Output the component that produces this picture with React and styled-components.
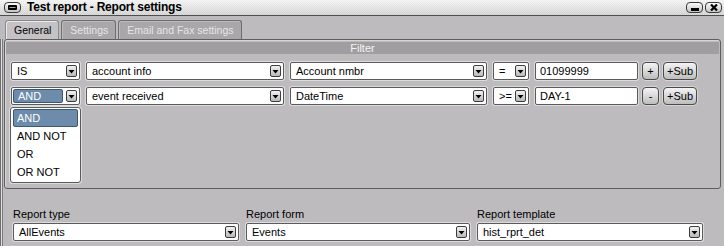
import React from "react";
import styled, { createGlobalStyle, css } from "styled-components";

const Global = createGlobalStyle`
  html, body { margin: 0; padding: 0; background: #bdbbbd; }
  body { font-family: "Liberation Sans", Arial, sans-serif; font-size: 11px; color: #000; }
`;

const Window = styled.div`
  width: 724px;
  height: 246px;
  overflow: hidden;
  background: #bdbbbd;
  display: flex;
  flex-direction: column;
  box-sizing: border-box;
`;

const TitleBar = styled.div`
  height: 15px;
  flex: none;
  display: flex;
  align-items: center;
  padding: 0 2px 0 4px;
  gap: 6px;
  border-bottom: 1px solid #4e4e4e;
  background:
    linear-gradient(rgba(255,255,255,0.75), rgba(255,255,255,0.1)),
    repeating-conic-gradient(#dadada 0 25%, #c8c8c8 0 50%) 0 0 / 2px 2px;
`;

const Title = styled.div`
  flex: 1;
  font-weight: bold;
  font-size: 12px;
  letter-spacing: -0.2px;
  line-height: 15px;
`;

const WinButton = styled.div`
  width: 17px;
  height: 11px;
  box-sizing: border-box;
  border: 1px solid #3a3a3a;
  border-radius: 4px;
  background: linear-gradient(#fafafa, #c4c4c4);
  display: flex;
  align-items: center;
  justify-content: center;
`;

const RightButtons = styled.div`
  display: flex;
  gap: 2px;
`;

const TabsRow = styled.div`
  flex: none;
  display: flex;
  gap: 2px;
  padding: 3px 0 0 5px;
  height: 20px;
  align-items: flex-end;
`;

const Tab = styled.div`
  height: 19px;
  box-sizing: border-box;
  padding: 2px 7px 0 8px;
  border: 1px solid #6e6e6e;
  border-bottom: none;
  border-radius: 3px 3px 0 0;
  font-size: 10.5px;
  line-height: 14px;
  ${(p) =>
    p.$active
      ? css`
          background: #c4c2c4;
          color: #000;
          border-color: #8a8a8a;
          box-shadow: inset 1px 1px 0 #e8e8e8;
        `
      : css`
          background: #a9a7a9;
          color: #e6e6e6;
          box-shadow: inset 1px 1px 0 #bcbabc;
        `}
`;

const Body = styled.div`
  flex: 1;
  display: flex;
  flex-direction: column;
  border-left: 1px solid #6e6e6e;
  box-shadow: inset 1px 0 0 #e0e0e0, inset 2px 0 0 #7a7a7a;
  padding: 0 3px 0 3px;
`;

const FilterGroup = styled.div`
  position: relative;
  height: 150px;
  box-sizing: border-box;
  border: 1px solid #5e5e5e;
  border-radius: 3px;
  box-shadow: inset 1px 1px 0 #d6d6d6;
  padding: 2px 1px 0;
  display: flex;
  flex-direction: column;
`;

const FilterHeader = styled.div`
  height: 12px;
  line-height: 12px;
  background: #a09ea0;
  color: #f4f4f4;
  text-align: center;
  font-size: 11px;
`;

const Rows = styled.div`
  display: flex;
  flex-direction: column;
  gap: 7px;
  padding: 8px 0 0 5px;
`;

const Row = styled.div`
  display: flex;
  align-items: center;
  gap: 6px;
  height: 18px;
`;

const SelectBox = styled.div`
  width: ${(p) => p.$w}px;
  height: 18px;
  box-sizing: border-box;
  border: 1px solid #5a5a5a;
  border-radius: 2px;
  background: #fff;
  box-shadow: 0 0 0 1px #dcdcdc;
  display: flex;
  align-items: center;
  padding: 1px 2px 1px 1px;
  gap: 3px;
  flex: none;
`;

const SelectText = styled.div`
  flex: 1;
  height: 14px;
  line-height: 14px;
  padding-left: 4px;
  font-size: 11px;
  white-space: nowrap;
  box-sizing: border-box;
  ${(p) =>
    p.$selected &&
    css`
      background: #6d8baa;
      color: #fff;
      border: 1px solid #3e5873;
      border-radius: 2px;
      line-height: 12px;
    `}
`;

const ArrowBtn = styled.div`
  width: 11px;
  height: 12px;
  box-sizing: border-box;
  border: 1px solid #3c3c3c;
  border-radius: 2px;
  background: linear-gradient(#f2f2f2, #b8b8b8);
  display: flex;
  align-items: center;
  justify-content: center;
  flex: none;
`;

const TextInput = styled.div`
  width: ${(p) => p.$w}px;
  height: 18px;
  box-sizing: border-box;
  border: 1px solid #5a5a5a;
  border-radius: 2px;
  background: #fff;
  box-shadow: 0 0 0 1px #dcdcdc;
  padding-left: 4px;
  line-height: 16px;
  font-size: 11px;
  flex: none;
`;

const PushButton = styled.div`
  width: ${(p) => p.$w}px;
  height: 18px;
  box-sizing: border-box;
  border: 1px solid #4a4a4a;
  border-radius: 4px;
  background: linear-gradient(#f4f4f4, #bdbdbd);
  box-shadow: 0 0 0 1px #d6d6d6;
  text-align: center;
  line-height: 16px;
  font-size: 11px;
  flex: none;
  margin-left: ${(p) => p.$ml || 0}px;
`;

const DropList = styled.div`
  position: absolute;
  left: 5px;
  top: 67px;
  width: 71px;
  height: 76px;
  box-sizing: border-box;
  background: #fff;
  border: 1px solid #5a5a5a;
  border-radius: 3px;
  box-shadow: 0 0 0 1px #dcdcdc;
  padding: 1px 2px;
  display: flex;
  flex-direction: column;
`;

const DropItem = styled.div`
  height: 18px;
  line-height: 16px;
  box-sizing: border-box;
  padding-left: 3px;
  font-size: 11px;
  border: 1px solid transparent;
  border-radius: 2px;
  ${(p) =>
    p.$active &&
    css`
      background: #6d8baa;
      border-color: #3e5873;
      color: #fff;
    `}
`;

const ReportGrid = styled.div`
  display: grid;
  grid-template-columns: 226px 224px 226px;
  column-gap: 7px;
  padding: 19px 0 0 9px;
`;

const Field = styled.div`
  display: flex;
  flex-direction: column;
  gap: 2px;
`;

const Label = styled.div`
  font-size: 11px;
  line-height: 13px;
`;

const Arrow = () => (
  <svg width="7" height="5" viewBox="0 0 7 5">
    <path d="M0.5 1 L6.5 1 L3.5 4.5 Z" fill="#000" />
  </svg>
);

const Select = ({ w, children, selected }) => (
  <SelectBox $w={w}>
    <SelectText $selected={selected}>{children}</SelectText>
    <ArrowBtn>
      <Arrow />
    </ArrowBtn>
  </SelectBox>
);

export default function App() {
  return (
    <>
      <Global />
      <Window>
        <TitleBar>
          <WinButton>
            <svg width="9" height="5" viewBox="0 0 9 5">
              <rect x="0" y="0" width="9" height="5" rx="1" fill="#000" />
              <rect x="1.5" y="2" width="6" height="1" fill="#aaa" />
            </svg>
          </WinButton>
          <Title>Test report - Report settings</Title>
          <RightButtons>
            <WinButton>
              <svg width="8" height="7" viewBox="0 0 8 7">
                <rect x="0" y="4" width="8" height="3" fill="#000" />
              </svg>
            </WinButton>
            <WinButton>
              <svg width="8" height="7" viewBox="0 0 8 7">
                <path d="M1 0.5 L7 6.5 M7 0.5 L1 6.5" stroke="#000" strokeWidth="2.2" />
              </svg>
            </WinButton>
          </RightButtons>
        </TitleBar>
        <TabsRow>
          <Tab $active>General</Tab>
          <Tab>Settings</Tab>
          <Tab>Email and Fax settings</Tab>
        </TabsRow>
        <Body>
          <FilterGroup>
            <FilterHeader>Filter</FilterHeader>
            <Rows>
              <Row>
                <Select w={69}>IS</Select>
                <Select w={198}>account info</Select>
                <Select w={197}>Account nmbr</Select>
                <Select w={36}>=</Select>
                <TextInput $w={103}>01099999</TextInput>
                <PushButton $w={17} $ml={-2}>+</PushButton>
                <PushButton $w={34} $ml={-2}>+Sub</PushButton>
              </Row>
              <Row>
                <Select w={69} selected>AND</Select>
                <Select w={198}>event received</Select>
                <Select w={197}>DateTime</Select>
                <Select w={36}>&gt;=</Select>
                <TextInput $w={103}>DAY-1</TextInput>
                <PushButton $w={17} $ml={-2}>-</PushButton>
                <PushButton $w={34} $ml={-2}>+Sub</PushButton>
              </Row>
            </Rows>
            <DropList>
              <DropItem $active>AND</DropItem>
              <DropItem>AND NOT</DropItem>
              <DropItem>OR</DropItem>
              <DropItem>OR NOT</DropItem>
            </DropList>
          </FilterGroup>
          <ReportGrid>
            <Field>
              <Label>Report type</Label>
              <Select w={226}>AllEvents</Select>
            </Field>
            <Field>
              <Label>Report form</Label>
              <Select w={224}>Events</Select>
            </Field>
            <Field>
              <Label>Report template</Label>
              <Select w={226}>hist_rprt_det</Select>
            </Field>
          </ReportGrid>
        </Body>
      </Window>
    </>
  );
}
